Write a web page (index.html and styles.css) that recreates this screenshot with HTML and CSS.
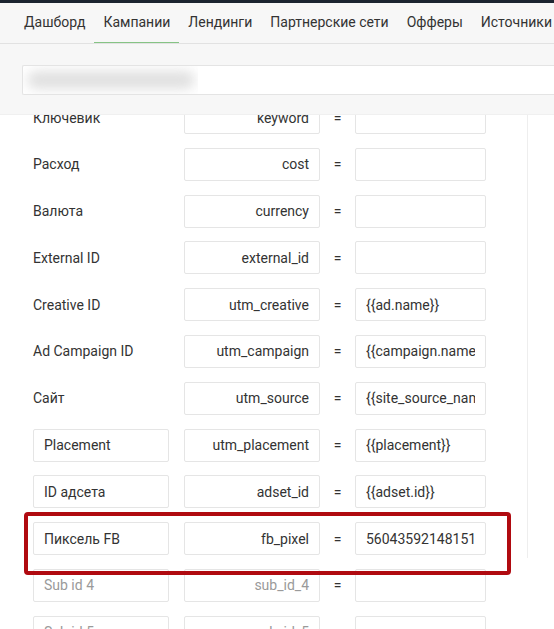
FILE: index.html
```html
<!DOCTYPE html>
<html lang="ru">
<head>
<meta charset="utf-8">
<title>Кампании</title>
<link rel="stylesheet" href="styles.css">
</head>
<body>
<div class="topbar"></div>
<nav class="nav">
  <a class="tab">Дашборд</a>
  <a class="tab active">Кампании</a>
  <a class="tab">Лендинги</a>
  <a class="tab">Партнерские сети</a>
  <a class="tab">Офферы</a>
  <a class="tab">Источники</a>
</nav>
<div class="filter">
  <div class="search"><div class="blur"><span class="blob"></span></div></div>
</div>
<div class="content">
  <div class="rows">
    <div class="row"><span class="label">Ключевик</span><span class="field param">keyword</span><span class="eq">=</span><span class="field value"><span class="txt"></span></span></div>
    <div class="row"><span class="label">Расход</span><span class="field param">cost</span><span class="eq">=</span><span class="field value"><span class="txt"></span></span></div>
    <div class="row"><span class="label">Валюта</span><span class="field param">currency</span><span class="eq">=</span><span class="field value"><span class="txt"></span></span></div>
    <div class="row"><span class="label">External ID</span><span class="field param">external_id</span><span class="eq">=</span><span class="field value"><span class="txt"></span></span></div>
    <div class="row"><span class="label">Creative ID</span><span class="field param">utm_creative</span><span class="eq">=</span><span class="field value"><span class="txt">{{ad.name}}</span></span></div>
    <div class="row"><span class="label">Ad Campaign ID</span><span class="field param">utm_campaign</span><span class="eq">=</span><span class="field value"><span class="txt">{{campaign.name}}</span></span></div>
    <div class="row"><span class="label">Сайт</span><span class="field param">utm_source</span><span class="eq">=</span><span class="field value"><span class="txt">{{site_source_name}}</span></span></div>
    <div class="row"><span class="field labelbox">Placement</span><span class="field param">utm_placement</span><span class="eq">=</span><span class="field value"><span class="txt">{{placement}}</span></span></div>
    <div class="row"><span class="field labelbox">ID адсета</span><span class="field param">adset_id</span><span class="eq">=</span><span class="field value"><span class="txt">{{adset.id}}</span></span></div>
    <div class="row highlight"><span class="field labelbox">Пиксель FB</span><span class="field param">fb_pixel</span><span class="eq">=</span><span class="field value"><span class="txt">56043592148151</span></span></div>
    <div class="row muted"><span class="field labelbox">Sub id 4</span><span class="field param">sub_id_4</span><span class="eq">=</span><span class="field value"><span class="txt"></span></span></div>
    <div class="row muted"><span class="field labelbox">Sub id 5</span><span class="field param">sub_id_5</span><span class="eq">=</span><span class="field value"><span class="txt"></span></span></div>
  </div>
  <div class="side"></div>
</div>
</body>
</html>
```
FILE: styles.css
```css
* { box-sizing: border-box; }
html, body { margin: 0; padding: 0; }
body {
  width: 554px;
  height: 629px;
  overflow: hidden;
  background: #ffffff;
  font-family: Roboto, "Noto Sans", Arial, sans-serif;
  color: #333333;
}
.topbar { height: 3px; background: #1c2530; }
.nav {
  height: 41px;
  background: #f7f7f7;
  border-bottom: 1px solid #e2e2e2;
  display: flex;
  padding-left: 15px;
  white-space: nowrap;
  overflow: hidden;
}
.tab {
  display: flex;
  align-items: center;
  padding: 0 9px 2px;
  font-size: 14px;
  color: #333333;
  border-bottom: 2px solid transparent;
  margin-bottom: -1px;
}
.tab.active { border-bottom-color: #86c485; }
.filter {
  height: 71px;
  background: #f7f7f7;
  border-bottom: 1px solid #f0f0f0;
  padding: 21px 0 0 22px;
}
.search {
  height: 30px;
  background: #ffffff;
  border: 1px solid #e4e4e4;
  border-right: none;
  border-radius: 2px 0 0 2px;
}
.blur {
  width: 175px;
  height: 28px;
  overflow: hidden;
  padding: 5px 0 0 4px;
}
.blob {
  display: block;
  width: 168px;
  height: 18px;
  border-radius: 9px;
  background: #e0e0e0;
  filter: blur(6px);
}
.content {
  display: flex;
  height: 514px;
  overflow: hidden;
}
.rows {
  width: 527px;
  flex: none;
  margin-top: -14px;
  display: grid;
  grid-auto-rows: 46.8px;
  align-content: start;
}
.row {
  position: relative;
  display: grid;
  grid-template-columns: 136px 15px 136px 35px 131px;
  grid-template-rows: 33px;
  padding-left: 33px;
  font-size: 14px;
}
.label {
  display: flex;
  align-items: center;
  grid-column: 1;
  white-space: nowrap;
}
.field {
  display: flex;
  align-items: center;
  border: 1px solid #e5e5e5;
  border-radius: 2px;
  background: #ffffff;
  white-space: nowrap;
  overflow: hidden;
}
.labelbox { grid-column: 1; padding-left: 10px; }
.param { grid-column: 3; justify-content: flex-end; padding-right: 10px; }
.eq { grid-column: 4; display: flex; align-items: center; justify-content: center; }
.value { grid-column: 5; padding: 0 10px 0 10px; }
.txt { display: block; overflow: hidden; white-space: nowrap; min-width: 0; flex: 1; }
.muted .field { color: #9a9a9a; }
.highlight { z-index: 2; }
.highlight::after {
  content: "";
  position: absolute;
  left: 24px;
  top: -10px;
  width: 479px;
  height: 55px;
  border: 4px solid #b00a10;
  border-radius: 4px;
  pointer-events: none;
}
.side {
  align-self: flex-start;
  height: 443px;
  width: 27px;
  border-left: 1px solid #eeeeee;
}
```
